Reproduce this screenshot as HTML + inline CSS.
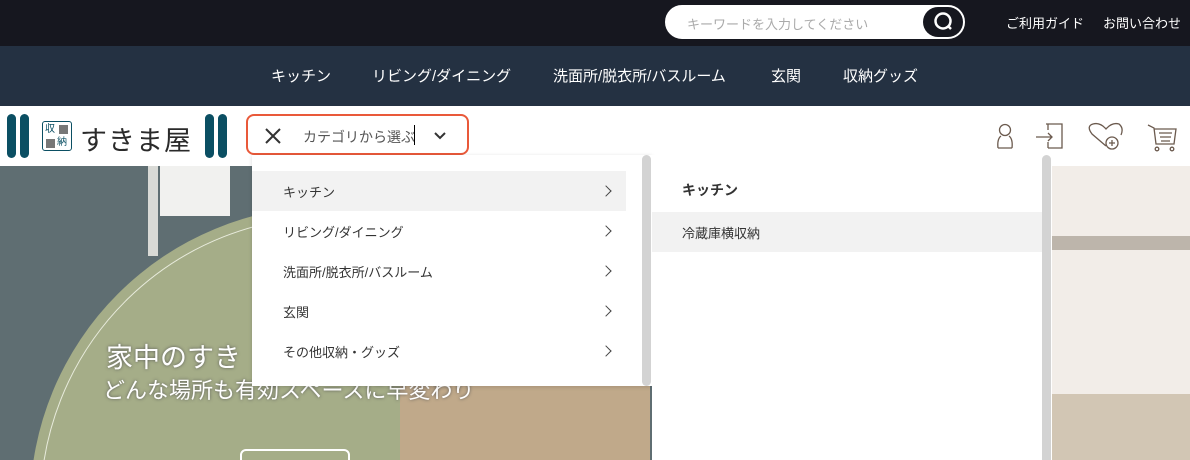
<!DOCTYPE html>
<html><head><meta charset="utf-8"><style>
*{margin:0;padding:0;box-sizing:border-box}
html,body{width:1190px;height:460px;overflow:hidden}
body{position:relative;font-family:"Liberation Sans","Noto Sans CJK JP",sans-serif;background:#fff}
.abs{position:absolute}
.top{left:0;top:0;width:1190px;height:46px;background:#16171f}
.search{left:665px;top:5px;width:300px;height:34px;background:#fff;border-radius:17px;border:2px solid #fff}
.search span{position:absolute;left:20px;top:7px;font-size:13px;color:#aaa}
.sbtn{position:absolute;right:0;top:0;width:40px;height:30px;border-radius:15px;background:#16171f}
.tl{top:13px;font-size:13px;color:#fff}
.nav{left:0;top:46px;width:1190px;height:60px;background:#243142}
.nav span{position:absolute;top:19px;font-size:15px;color:#fff}
.hdr{left:0;top:106px;width:1190px;height:60px;background:#fff}
.bar{width:9px;height:44px;border-radius:5px;background:#0b4f63;top:114px}
.sel{left:246px;top:114px;width:223px;height:41px;border:2px solid #e9593a;border-radius:8px;background:#fff}
.hero{left:0;top:166px;width:1190px;height:294px;background:#5f6e72;overflow:hidden}
.p1{left:252px;top:155px;width:400px;height:231px;background:#fff;box-shadow:0 1px 4px rgba(0,0,0,.15)}
.p2{left:652px;top:155px;width:400px;height:305px;background:#fff;overflow:hidden}
.sb{width:9px;border-radius:5px;background:#d3d3d3}
.it{position:absolute;left:0;width:374px;height:40px;font-size:13px;color:#333}
.it span{position:absolute;left:31px;top:11px}
.it i{position:absolute;right:16px;top:16px;width:8px;height:8px;border-right:1.3px solid #444;border-top:1.3px solid #444;transform:rotate(45deg)}
</style></head><body>
<div class="abs top"></div>
<div class="abs search"><span>キーワードを入力してください</span><div class="sbtn"><svg width="40" height="30"><circle cx="20" cy="14" r="7.5" fill="none" stroke="#fff" stroke-width="2.5"/><line x1="25" y1="19" x2="28" y2="22" stroke="#fff" stroke-width="2.5"/></svg></div></div>
<div class="abs tl" style="left:1006px">ご利用ガイド</div>
<div class="abs tl" style="left:1103px">お問い合わせ</div>
<div class="abs nav"><span style="left:271px">キッチン</span><span style="left:372px">リビング/ダイニング</span><span style="left:553px">洗面所/脱衣所/バスルーム</span><span style="left:771px">玄関</span><span style="left:843px">収納グッズ</span></div>
<div class="abs hdr"></div>
<div class="abs bar" style="left:7px"></div><div class="abs bar" style="left:20px"></div>
<div class="abs bar" style="left:205px"></div><div class="abs bar" style="left:218px"></div>
<div class="abs" style="left:42px;top:121px;width:30px;height:30px;border:1.5px solid #0b4f63;border-radius:3px;font-size:10px;color:#0b4f63;line-height:13px">
<div style="position:absolute;left:2px;top:1px">収</div><div style="position:absolute;left:16px;top:3px;width:9px;height:9px;background:#777"></div>
<div style="position:absolute;left:3px;top:17px;width:9px;height:9px;background:#777"></div><div style="position:absolute;left:14px;top:14px">納</div></div>
<div class="abs" style="left:80px;top:119px;font-size:27px;color:#2a2a2a;letter-spacing:1px">すきま屋</div>
<div class="abs sel"><svg class="abs" style="left:16px;top:11px" width="18" height="18"><path d="M2 2L16 16M16 2L2 16" stroke="#333" stroke-width="2"/></svg>
<span class="abs" style="left:55px;top:11px;font-size:14px;color:#555">カテゴリから選ぶ</span><div class="abs" style="left:166px;top:9px;width:1px;height:20px;background:#000"></div>
<svg class="abs" style="left:186px;top:15px" width="12" height="10"><path d="M1 2L6 7L11 2" stroke="#333" stroke-width="2" fill="none"/></svg></div>
<svg class="abs" style="left:990px;top:120px" width="190" height="32" fill="none" stroke="#6b5a4e" stroke-width="1.3">
<circle cx="15" cy="10" r="5.5"/><path d="M8 28Q7 19 11 16M22 28Q23 19 19 16M8 28H22"/>
<path d="M56 4H72V28H58M58 28V22M58 10V4M46 17H62M58 13L62 17L58 21"/>
<path d="M116 26L102 14Q96 6 103 4Q110 2 116 9Q122 2 129 4Q134 8 131 15"/><circle cx="122" cy="23" r="6"/><path d="M122 20V26M119 23H125"/>
<path d="M158 5L164 8L166 24H184L186 9H164M169 13H182M170 17H181M171 21H180"/><circle cx="167" cy="29" r="1.8"/><circle cx="182" cy="29" r="1.8"/>
</svg>
<div class="abs hero">
<div class="abs" style="left:160px;top:0;width:70px;height:50px;background:#f1f1ef"></div>
<div class="abs" style="left:148px;top:0;width:10px;height:90px;background:#d9dad6"></div>
<div class="abs" style="left:30px;top:40px;width:600px;height:600px;border-radius:50%;background:#a5ad88"></div>
<div class="abs" style="left:40px;top:50px;width:580px;height:580px;border-radius:50%;border:1.5px solid #e8ebdc"></div>
<div class="abs" style="left:400px;top:200px;width:250px;height:100px;background:#c0a98a"></div>
<div class="abs" style="left:106px;top:170px;font-size:27px;color:#fff;text-shadow:0 0 3px #555">家中のすき</div>
<div class="abs" style="left:103px;top:207px;font-size:22px;color:#fff;text-shadow:0 0 3px #555">どんな場所も有効スペースに早変わり</div>
<div class="abs" style="left:240px;top:283px;width:110px;height:20px;border:2px solid #fff;border-radius:6px"></div>
<div class="abs" style="left:1052px;top:0;width:138px;height:294px;background:#f2ede8"></div>
<div class="abs" style="left:1052px;top:70px;width:138px;height:14px;background:#bdb5ab"></div>
<div class="abs" style="left:1052px;top:228px;width:138px;height:70px;background:#d2c6b4"></div>
</div>
<div class="abs p1">
<div class="it" style="top:16px;background:#f2f2f2"><span>キッチン</span><i></i></div>
<div class="it" style="top:56px"><span>リビング/ダイニング</span><i></i></div>
<div class="it" style="top:96px"><span>洗面所/脱衣所/バスルーム</span><i></i></div>
<div class="it" style="top:136px"><span>玄関</span><i></i></div>
<div class="it" style="top:176px"><span>その他収納・グッズ</span><i></i></div>
<div class="abs sb" style="left:390px;top:0;height:231px"></div>
</div>
<div class="abs p2">
<div class="abs" style="left:30px;top:25px;font-size:14px;font-weight:bold;color:#333">キッチン</div>
<div class="abs" style="left:0;top:57px;width:390px;height:40px;background:#f2f2f2"><span class="abs" style="left:30px;top:11px;font-size:13px;color:#333">冷蔵庫横収納</span></div>
<div class="abs sb" style="left:390px;top:0;height:320px"></div>
</div>
</body></html>
